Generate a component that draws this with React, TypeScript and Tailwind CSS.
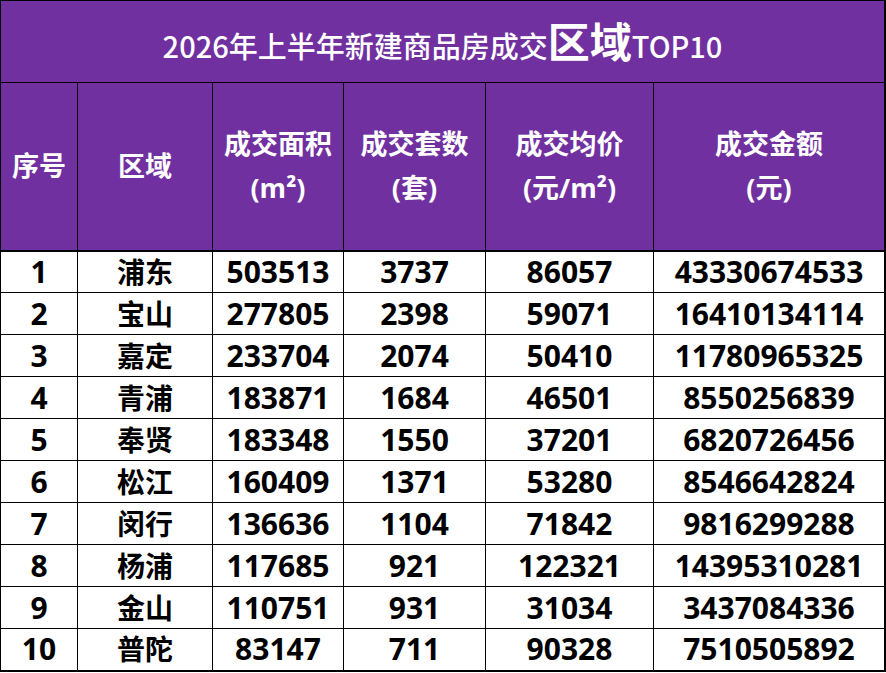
import React from "react";

type Row = [string, string, string, string, string, string];

const rows: Row[] = [
  ["1", "浦东", "503513", "3737", "86057", "43330674533"],
  ["2", "宝山", "277805", "2398", "59071", "16410134114"],
  ["3", "嘉定", "233704", "2074", "50410", "11780965325"],
  ["4", "青浦", "183871", "1684", "46501", "8550256839"],
  ["5", "奉贤", "183348", "1550", "37201", "6820726456"],
  ["6", "松江", "160409", "1371", "53280", "8546642824"],
  ["7", "闵行", "136636", "1104", "71842", "9816299288"],
  ["8", "杨浦", "117685", "921", "122321", "14395310281"],
  ["9", "金山", "110751", "931", "31034", "3437084336"],
  ["10", "普陀", "83147", "711", "90328", "7510505892"],
];

const HeadCell = ({ top, bottom }: { top: string; bottom?: string }) => (
  <th className="border border-black border-b-2 bg-[#7030a0] text-white font-bold text-[27px] leading-[44px] align-middle">
    <div>{top}</div>
    {bottom && <div>{bottom}</div>}
  </th>
);

export default function App() {
  return (
    <div className="w-[886px] h-[673px] bg-white overflow-hidden font-['Open_Sans','Noto_Sans_CJK_SC',sans-serif]">
      <table className="w-[886px] table-fixed border-collapse border-r-2 border-b-2 border-black">
        <colgroup>
          <col className="w-[77px]" />
          <col className="w-[135px]" />
          <col className="w-[131px]" />
          <col className="w-[142px]" />
          <col className="w-[168px]" />
          <col />
        </colgroup>
        <thead>
          <tr className="h-[82px]">
            <th
              colSpan={6}
              className="border border-black bg-[#7030a0] text-white font-medium text-[29px] align-middle pb-1 font-['Noto_Sans_CJK_SC',sans-serif]"
            >
              2026年上半年新建商品房成交
              <span className="text-[42px] font-bold">区域</span>
              TOP10
            </th>
          </tr>
          <tr className="h-[168px]">
            <HeadCell top="序号" />
            <HeadCell top="区域" />
            <HeadCell top="成交面积" bottom="(m²)" />
            <HeadCell top="成交套数" bottom="(套)" />
            <HeadCell top="成交均价" bottom="(元/m²)" />
            <HeadCell top="成交金额" bottom="(元)" />
          </tr>
        </thead>
        <tbody>
          {rows.map((r) => (
            <tr key={r[0]} className="h-[42px]">
              {r.map((v, i) => (
                <td
                  key={i}
                  className={`border border-black text-center font-bold text-black leading-none ${
                    i === 1 ? "text-[28px]" : "text-[30px]"
                  }`}
                >
                  {v}
                </td>
              ))}
            </tr>
          ))}
        </tbody>
      </table>
    </div>
  );
}
